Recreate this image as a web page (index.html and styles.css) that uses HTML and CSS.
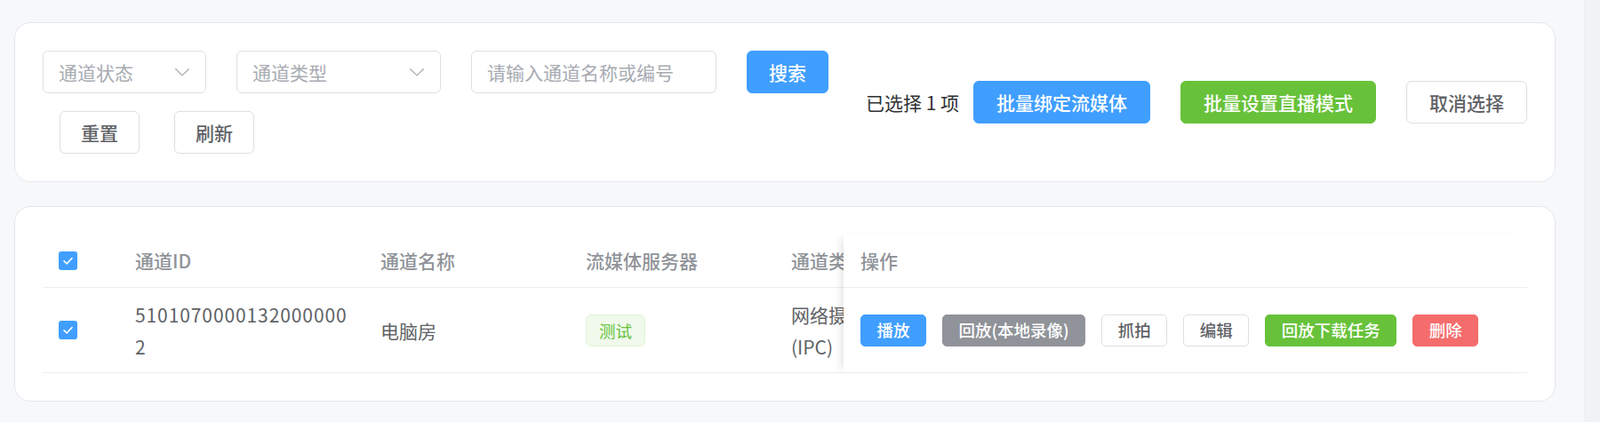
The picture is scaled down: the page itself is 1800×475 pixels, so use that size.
FILE: index.html
```html
<!DOCTYPE html>
<html lang="zh-CN">
<head>
<meta charset="utf-8">
<title>通道列表</title>
<link rel="stylesheet" href="styles.css">
</head>
<body>
<div class="page">
  <main class="content">
    <section class="card toolbar">
      <div class="filters">
        <div class="filter-row">
          <div class="select s1"><span>通道状态</span>
            <svg class="arrow" viewBox="0 0 1024 1024"><path d="M831.872 340.864 512 652.672 192.128 340.864a30.592 30.592 0 0 0-42.752 0 29.12 29.12 0 0 0 0 41.6L489.664 714.24a32 32 0 0 0 44.672 0l340.288-331.712a29.12 29.12 0 0 0 0-41.728 30.592 30.592 0 0 0-42.752 0z"/></svg>
          </div>
          <div class="select s2"><span>通道类型</span>
            <svg class="arrow" viewBox="0 0 1024 1024"><path d="M831.872 340.864 512 652.672 192.128 340.864a30.592 30.592 0 0 0-42.752 0 29.12 29.12 0 0 0 0 41.6L489.664 714.24a32 32 0 0 0 44.672 0l340.288-331.712a29.12 29.12 0 0 0 0-41.728 30.592 30.592 0 0 0-42.752 0z"/></svg>
          </div>
          <div class="input"><span>请输入通道名称或编号</span></div>
          <button class="btn btn-primary">搜索</button>
        </div>
        <div class="filter-row row2">
          <button class="btn btn-plain">重置</button>
          <button class="btn btn-plain">刷新</button>
        </div>
      </div>
      <div class="batch">
        <span class="selected-count">已选择 1 项</span>
        <button class="btn btn-primary">批量绑定流媒体</button>
        <button class="btn btn-success">批量设置直播模式</button>
        <button class="btn">取消选择</button>
      </div>
    </section>

    <section class="card table-card">
      <div class="table-wrap">
        <div class="scroll-area">
          <table class="grid">
            <colgroup>
              <col class="c-sel"><col class="c-id"><col class="c-name"><col class="c-media"><col class="c-type">
            </colgroup>
            <thead>
              <tr>
                <th><span class="checkbox"><svg viewBox="0 0 21 21"><polyline points="6,10.8 9.2,13.8 15,7.6"/></svg></span></th>
                <th>通道ID</th>
                <th>通道名称</th>
                <th>流媒体服务器</th>
                <th>通道类型</th>
              </tr>
            </thead>
            <tbody>
              <tr>
                <td><span class="checkbox"><svg viewBox="0 0 21 21"><polyline points="6,10.8 9.2,13.8 15,7.6"/></svg></span></td>
                <td class="id-cell">51010700001320000002</td>
                <td>电脑房</td>
                <td><span class="tag">测试</span></td>
                <td>网络摄像机(IPC)</td>
              </tr>
            </tbody>
          </table>
        </div>
        <div class="fixed-col">
          <div class="fixed-head">操作</div>
          <div class="fixed-cell">
            <button class="btn-sm sm-primary">播放</button>
            <button class="btn-sm sm-info">回放(本地录像)</button>
            <button class="btn-sm">抓拍</button>
            <button class="btn-sm">编辑</button>
            <button class="btn-sm sm-success">回放下载任务</button>
            <button class="btn-sm sm-danger">删除</button>
          </div>
        </div>
      </div>
    </section>
  </main>
  <div class="scrollbar"></div>
</div>
</body>
</html>
```

FILE: styles.css
```css
* { box-sizing: border-box; }

body {
  margin: 0;
  background: #f7f8fa;
  font-family: "Noto Sans CJK SC", "Noto Sans", sans-serif;
}

.page {
  display: flex;
  height: 475px;
  overflow: hidden;
}

.content {
  flex: 1;
  min-width: 0;
  padding: 25px 32px 0 16px;
  display: flex;
  flex-direction: column;
  gap: 27px;
}

.scrollbar {
  width: 18px;
  background: #f1f2f4;
  border-left: 1px solid #eceef1;
}

.card {
  background: #fff;
  border: 1px solid #e4e7ed;
  border-radius: 18px;
  padding: 31px;
}

/* toolbar */
.toolbar {
  display: flex;
  justify-content: space-between;
  align-items: center;
}

.filters {
  display: flex;
  flex-direction: column;
  gap: 20px;
}

.filter-row {
  display: flex;
  align-items: center;
  gap: 34px;
}

.row2 {
  padding-left: 19px;
  gap: 39px;
}

.select, .input {
  height: 48px;
  border: 1px solid #dcdfe6;
  border-radius: 6px;
  display: flex;
  align-items: center;
  padding: 0 15px 0 17px;
  font-size: 21px;
  line-height: 1;
  color: #a8abb2;
}

.select { justify-content: space-between; }
.s1 { width: 184px; }
.s2 { width: 230px; }
.input { width: 276px; }

.arrow {
  width: 22px;
  height: 22px;
  fill: #a8abb2;
}

.btn {
  height: 48px;
  padding: 0 25px;
  border-radius: 6px;
  border: 1px solid #dcdfe6;
  background: #fff;
  color: #606266;
  font-family: inherit;
  font-size: 21px;
  font-weight: 500;
  line-height: 1;
  display: inline-flex;
  align-items: center;
  justify-content: center;
}

.filter-row .btn { padding: 0 24px; }
.row2 .btn { padding: 0 23px; }

.btn-primary { background: #409eff; border-color: #409eff; color: #fff; }
.btn-success { background: #67c23a; border-color: #67c23a; color: #fff; }

.batch {
  display: flex;
  align-items: center;
}

.selected-count {
  font-size: 21px;
  color: #303133;
  margin-right: 16px;
}

.batch .btn + .btn { margin-left: 34px; }

/* table */
.table-card { padding-top: 30px; }

.table-wrap {
  display: flex;
}

.scroll-area {
  flex: 1;
  min-width: 0;
  overflow: hidden;
}

.grid {
  width: 984px;
  table-layout: fixed;
  border-collapse: separate;
  border-spacing: 0;
  font-size: 21px;
}

.c-sel { width: 86px; }
.c-id { width: 276px; }
.c-name { width: 231px; }
.c-media { width: 231px; }
.c-type { width: 160px; }

.grid th {
  height: 61px;
  padding: 0 18px;
  text-align: left;
  font-weight: 500;
  color: #909399;
  border-bottom: 1px solid #ebeef5;
  white-space: nowrap;
  overflow: hidden;
  vertical-align: middle;
}

.grid td {
  height: 96px;
  padding: 0 18px;
  color: #606266;
  line-height: 36px;
  border-bottom: 1px solid #ebeef5;
  vertical-align: middle;
}

.id-cell {
  word-break: break-all;
  letter-spacing: 0.9px;
}

.checkbox {
  display: block;
  width: 21px;
  height: 21px;
  border-radius: 3px;
  background: #409eff;
}

.checkbox svg {
  display: block;
  width: 21px;
  height: 21px;
  fill: none;
  stroke: #fff;
  stroke-width: 1.6;
  stroke-linecap: round;
  stroke-linejoin: round;
}

.tag {
  display: inline-flex;
  align-items: center;
  height: 36px;
  padding: 0 14px;
  border: 1px solid #e1f3d8;
  background: #f0f9eb;
  color: #67c23a;
  border-radius: 6px;
  font-size: 18.5px;
  line-height: 1;
}

.fixed-col {
  width: 769px;
  background: #fff;
  position: relative;
  z-index: 1;
  box-shadow: -7px 0 9px -5px rgba(0, 0, 0, 0.12);
}

.fixed-head {
  height: 61px;
  display: flex;
  align-items: center;
  padding-left: 19px;
  font-size: 21px;
  font-weight: 500;
  color: #909399;
  border-bottom: 1px solid #ebeef5;
}

.fixed-cell {
  height: 96px;
  display: flex;
  align-items: center;
  gap: 18px;
  padding-left: 19px;
  border-bottom: 1px solid #ebeef5;
}

.btn-sm {
  height: 36px;
  padding: 0 17.5px;
  border-radius: 5px;
  border: 1px solid #dcdfe6;
  background: #fff;
  color: #606266;
  font-family: inherit;
  font-size: 18.5px;
  font-weight: 500;
  line-height: 1;
  display: inline-flex;
  align-items: center;
}

.sm-primary { background: #409eff; border-color: #409eff; color: #fff; }
.sm-info { background: #909399; border-color: #909399; color: #fff; }
.sm-success { background: #67c23a; border-color: #67c23a; color: #fff; }
.sm-danger { background: #f56c6c; border-color: #f56c6c; color: #fff; }
```
